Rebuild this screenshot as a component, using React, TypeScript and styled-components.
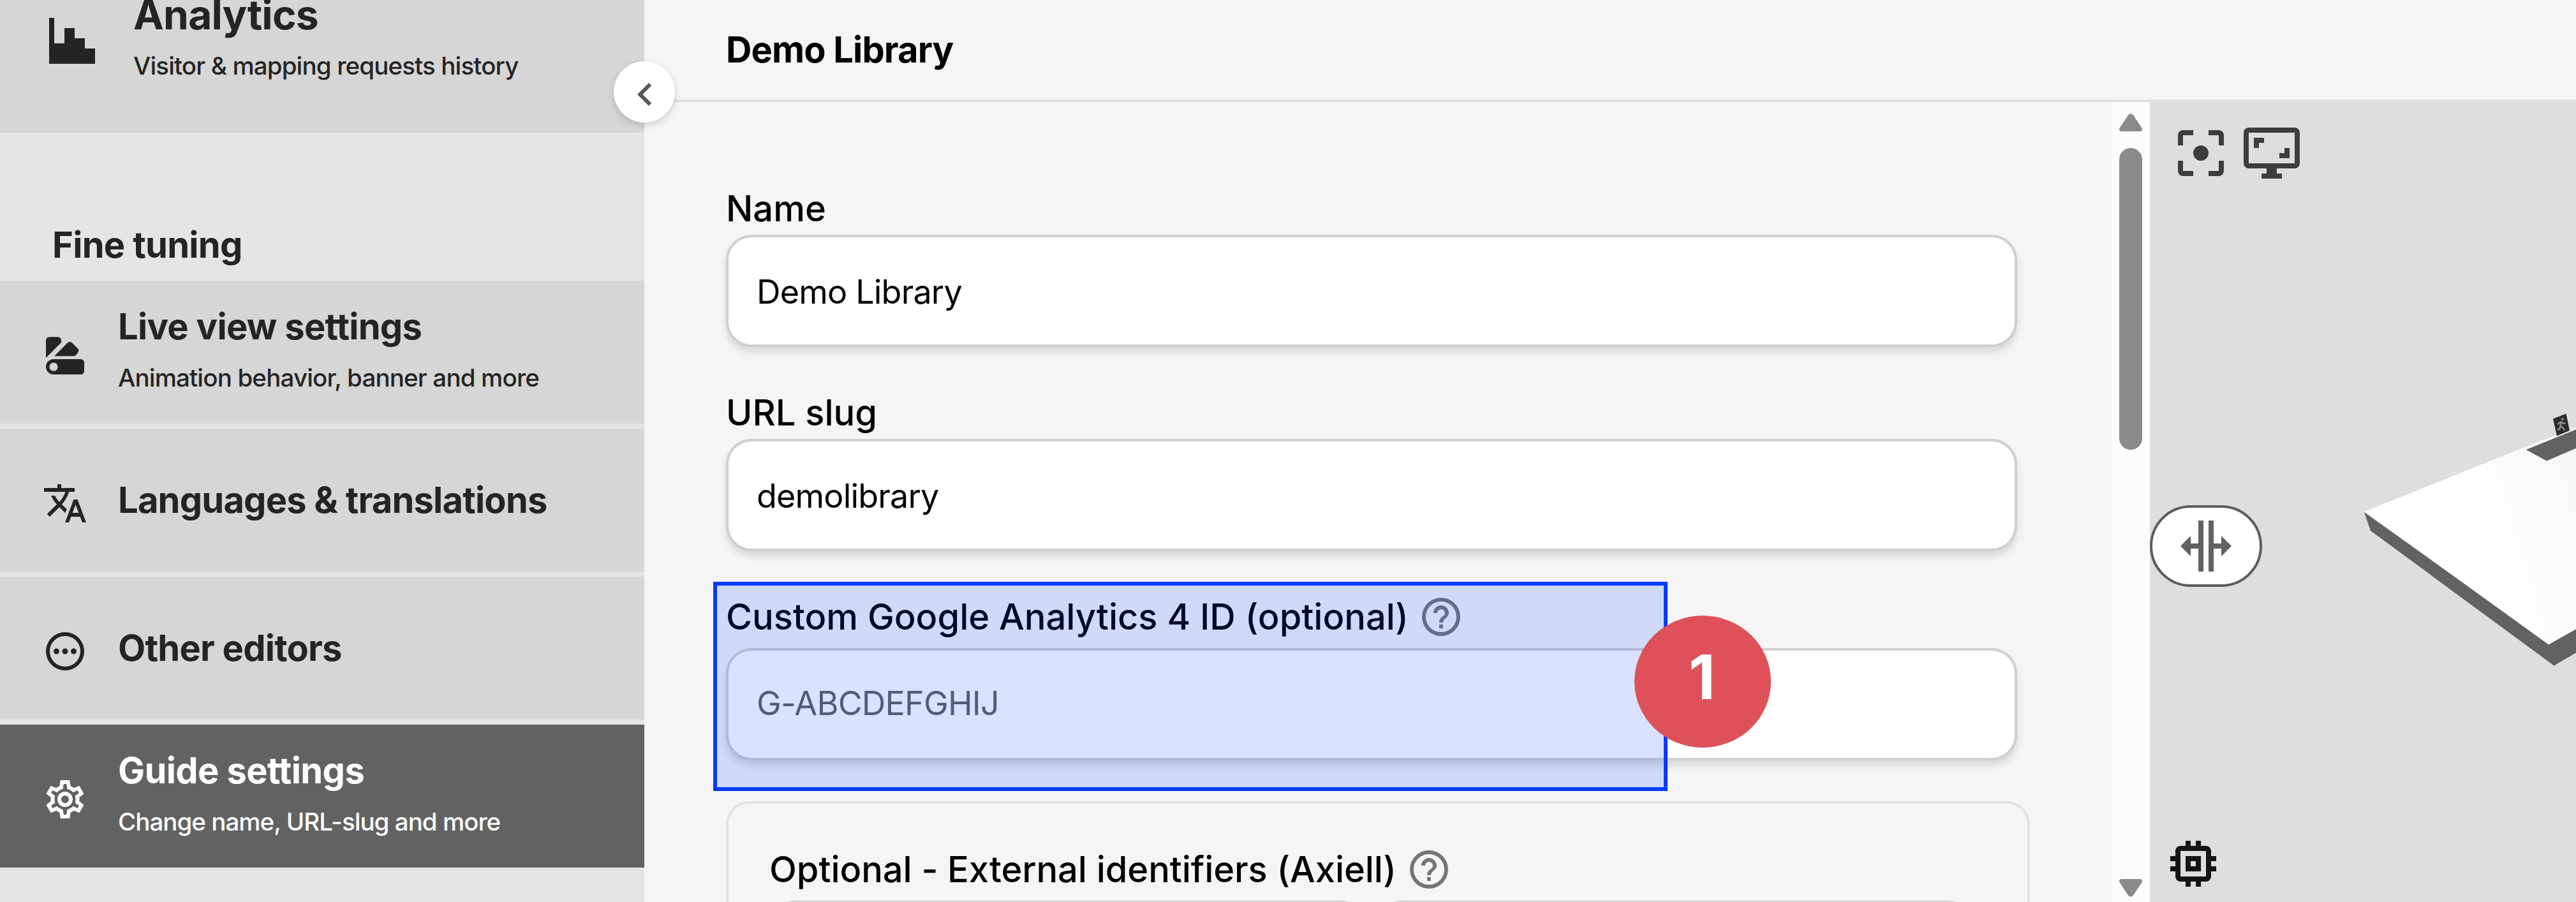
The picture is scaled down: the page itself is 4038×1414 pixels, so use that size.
import React from 'react';
import styled, { createGlobalStyle } from 'styled-components';

const GlobalStyle = createGlobalStyle`
  *, *::before, *::after { box-sizing: border-box; }
  html, body { margin: 0; padding: 0; overflow: hidden; }
  body { font-family: Inter, "Liberation Sans", sans-serif; color: #000; background: #f5f5f5; }
`;

const paths = {
  histogram: 'M3,3H5V13H9V7H13V11H17V15H21V21H3V3Z',
  translate:
    'M12.87,15.07L10.33,12.56L10.36,12.53C12.1,10.59 13.34,8.36 14.07,6H17V4H10V2H8V4H1V6H12.17C11.5,7.92 10.44,9.75 9,11.35C8.07,10.32 7.3,9.19 6.69,8H4.69C5.42,9.63 6.42,11.17 7.67,12.56L2.58,17.58L4,19L9,14L12.11,17.11L12.87,15.07M18.5,10H16.5L12,22H14L15.12,19H19.87L21,22H23L18.5,10M15.88,17L17.5,12.67L19.12,17H15.88Z',
  dots: 'M12,2A10,10 0 1,0 22,12A10,10 0 0,0 12,2M12,20A8,8 0 1,1 20,12A8,8 0 0,1 12,20M12,10.5A1.5,1.5 0 1,0 13.5,12A1.5,1.5 0 0,0 12,10.5M7.5,10.5A1.5,1.5 0 1,0 9,12A1.5,1.5 0 0,0 7.5,10.5M16.5,10.5A1.5,1.5 0 1,0 18,12A1.5,1.5 0 0,0 16.5,10.5Z',
  cog: 'M12,8A4,4 0 0,1 16,12A4,4 0 0,1 12,16A4,4 0 0,1 8,12A4,4 0 0,1 12,8M12,10A2,2 0 0,0 10,12A2,2 0 0,0 12,14A2,2 0 0,0 14,12A2,2 0 0,0 12,10M10,22C9.75,22 9.54,21.82 9.5,21.58L9.13,18.93C8.5,18.68 7.96,18.34 7.44,17.94L4.95,18.95C4.73,19.03 4.46,18.95 4.34,18.73L2.34,15.27C2.21,15.05 2.27,14.78 2.46,14.63L4.57,12.97L4.5,12L4.57,11L2.46,9.37C2.27,9.22 2.21,8.95 2.34,8.73L4.34,5.27C4.46,5.05 4.73,4.96 4.95,5.05L7.44,6.05C7.96,5.66 8.5,5.32 9.13,5.07L9.5,2.42C9.54,2.18 9.75,2 10,2H14C14.25,2 14.46,2.18 14.5,2.42L14.87,5.07C15.5,5.32 16.04,5.66 16.56,6.05L19.05,5.05C19.27,4.96 19.54,5.05 19.66,5.27L21.66,8.73C21.79,8.95 21.73,9.22 21.54,9.37L19.43,11L19.5,12L19.43,13L21.54,14.63C21.73,14.78 21.79,15.05 21.66,15.27L19.66,18.73C19.54,18.95 19.27,19.04 19.05,18.95L16.56,17.95C16.04,18.34 15.5,18.68 14.87,18.93L14.5,21.58C14.46,21.82 14.25,22 14,22H10M11.25,4L10.88,6.61C9.68,6.86 8.62,7.5 7.85,8.39L5.44,7.35L4.69,8.65L6.8,10.2C6.4,11.37 6.4,12.64 6.8,13.8L4.68,15.36L5.43,16.66L7.86,15.62C8.63,16.5 9.68,17.14 10.87,17.38L11.24,20H12.76L13.13,17.39C14.32,17.14 15.37,16.5 16.14,15.62L18.57,16.66L19.32,15.36L17.2,13.81C17.6,12.64 17.6,11.37 17.2,10.2L19.31,8.65L18.56,7.35L16.15,8.39C15.38,7.5 14.32,6.86 13.12,6.62L12.75,4H11.25Z',
  swatch:
    'M2,4.2A1.8,1.8 0 0,1 3.8,2.4H8.2A1.8,1.8 0 0,1 10,4.2V5.3L2,13.3ZM6.4,12.4L13.2,5.5A1.8,1.8 0 0,1 15.7,5.5L18.7,8.5A1.6,1.6 0 0,1 18.8,10.4L17.9,11.7A1.7,1.7 0 0,1 16.5,12.4ZM6,14H20.2A1.8,1.8 0 0,1 22,15.8V20.2A1.8,1.8 0 0,1 20.2,22H6A4,4 0 0,1 6,14ZM6,15.8A2.2,2.2 0 1,0 8.2,18A2.2,2.2 0 0,0 6,15.8Z',
  chevron: 'M15.41,16.58L10.83,12L15.41,7.41L14,6L8,12L14,18L15.41,16.58Z',
  help: 'M11,18H13V16H11V18M12,2A10,10 0 0,0 2,12A10,10 0 0,0 12,22A10,10 0 0,0 22,12A10,10 0 0,0 12,2M12,20C7.59,20 4,16.41 4,12C4,7.59 7.59,4 12,4C16.41,4 20,7.59 20,12C20,16.41 16.41,20 12,20M12,6A4,4 0 0,0 8,10H10A2,2 0 0,1 12,8A2,2 0 0,1 14,10C14,12 11,11.75 11,15H13C13,12.75 16,12.5 16,10A4,4 0 0,0 12,6Z',
  focus:
    'M12,9A3,3 0 0,0 9,12A3,3 0 0,0 12,15A3,3 0 0,0 15,12A3,3 0 0,0 12,9M19,19H15V21H19A2,2 0 0,0 21,19V15H19M19,3H15V5H19V9H21V5A2,2 0 0,0 19,3M5,5H9V3H5A2,2 0 0,0 3,5V9H5M5,15H3V19A2,2 0 0,0 5,21H9V19H5V15Z',
  monitor:
    'M9,6H5V10H7V8H9M19,10H17V12H15V14H19M21,16H3V4H21M21,2H3C1.89,2 1,2.89 1,4V16A2,2 0 0,0 3,18H10V20H8V22H16V20H14V18H21A2,2 0 0,0 23,16V4C23,2.89 22.1,2 21,2Z',
  split: 'M18,16V13H15V22H13V2H15V11H18V8L22,12L18,16M2,12L6,16V13H9V22H11V2H9V11H6V8L2,12Z',
  chip: 'M17,17H7V7H17M21,11V9H19V7C19,5.89 18.1,5 17,5H15V3H13V5H11V3H9V5H7C5.89,5 5,5.89 5,7V9H3V11H5V13H3V15H5V17A2,2 0 0,0 7,19H9V21H11V19H13V21H15V19H17A2,2 0 0,0 19,17V15H21V13H19V11M13,13H11V11H13M15,9H9V15H15V9Z',
};

type IconName = keyof typeof paths;

const Svg = styled.svg<{ $size: number }>`
  display: block;
  flex: none;
  width: ${(p) => p.$size}px;
  height: ${(p) => p.$size}px;
  fill: currentColor;
`;

const Icon = ({ name, size = 72 }: { name: IconName; size?: number }) => (
  <Svg $size={size} viewBox="0 0 24 24" aria-hidden="true">
    <path d={paths[name]} fillRule="evenodd" />
  </Svg>
);

const Page = styled.div`
  display: grid;
  grid-template-columns: 1010px 1fr;
  width: 4038px;
  height: 1414px;
  overflow: hidden;
  background: #f5f5f5;
`;

/* ---------- sidebar ---------- */

const Sidebar = styled.aside`
  position: relative;
  z-index: 2;
  height: 1414px;
  background: #e5e5e5;
  color: #242424;
`;

const MainEntry = styled.div`
  display: flex;
  gap: 48px;
  height: 208px;
  padding: 16px 0 0 65px;
  background: #d6d6d6;
`;

const MainText = styled.div`
  margin-top: -35px;
`;

const SectionTitle = styled.h2`
  display: flex;
  align-items: flex-end;
  height: 232px;
  margin: 0;
  padding: 0 0 16px 82px;
  font-size: 56px;
  font-weight: 700;
  line-height: 80px;
  letter-spacing: -0.68px;
`;

const Menu = styled.nav`
  display: flex;
  flex-direction: column;
  gap: 8px;
`;

const MenuItem = styled.a<{ $active?: boolean }>`
  display: flex;
  align-items: center;
  gap: 47px;
  height: 224px;
  padding-left: 66px;
  background: ${(p) => (p.$active ? '#626262' : '#d6d6d6')};
  color: ${(p) => (p.$active ? '#fff' : '#242424')};
`;

const MenuIcon = styled.span`
  padding-top: 10px;
`;

const MenuText = styled.span<{ $double: boolean }>`
  display: flex;
  flex-direction: column;
  padding-bottom: ${(p) => (p.$double ? 5 : 0)}px;
`;

const ItemTitle = styled.span<{ $large?: boolean; $tracking?: number }>`
  display: block;
  font-size: ${(p) => (p.$large ? 64 : 56)}px;
  font-weight: 700;
  line-height: 84px;
  letter-spacing: ${(p) => p.$tracking ?? -0.75}px;
  white-space: nowrap;
`;

const ItemNote = styled.span<{ $tracking?: number }>`
  display: block;
  font-size: 38.5px;
  font-weight: 450;
  line-height: 76px;
  letter-spacing: ${(p) => p.$tracking ?? -0.86}px;
  white-space: nowrap;
`;

const CollapseButton = styled.button`
  position: absolute;
  top: 96px;
  right: -48px;
  display: flex;
  align-items: center;
  justify-content: center;
  width: 96px;
  height: 96px;
  padding: 7px 0 0 2px;
  border: 0;
  border-radius: 50%;
  background: #fff;
  color: #585858;
  box-shadow: 0 4px 12px rgba(0, 0, 0, 0.16);
`;

/* ---------- main ---------- */

const Main = styled.main`
  display: flex;
  flex-direction: column;
  min-width: 0;
  height: 1414px;
`;

const Header = styled.header`
  display: flex;
  align-items: center;
  flex: none;
  height: 160px;
  padding: 0 0 1px 128px;
  border-bottom: 4px solid #e2e2e2;
`;

const Title = styled.h1`
  margin: 0;
  font-size: 56px;
  font-weight: 700;
  letter-spacing: -0.85px;
`;

const Body = styled.div`
  display: grid;
  grid-template-columns: 2300px 60px 1fr;
  flex: none;
  height: 1254px;
`;

const Form = styled.form`
  height: 1254px;
  overflow: hidden;
  padding: 126px 128px 0;
`;

const Field = styled.div`
  position: relative;
  width: 2024px;
  margin-bottom: 62px;
`;

const LabelRow = styled.div<{ $height: number; $drop: number }>`
  display: flex;
  align-items: center;
  gap: 15px;
  height: ${(p) => p.$height}px;
  padding-bottom: ${(p) => p.$drop}px;
  color: #757575;
`;

const Label = styled.label<{ $tracking?: number }>`
  font-size: 56px;
  font-weight: 500;
  line-height: 80px;
  letter-spacing: ${(p) => p.$tracking ?? 0}px;
  color: #000;
  white-space: nowrap;
`;

const Input = styled.input`
  display: block;
  width: 100%;
  height: 176px;
  padding: 2px 44px 0;
  border: 4px solid #cfcfcf;
  border-radius: 40px;
  background: #fff;
  box-shadow: 0 8px 12px rgba(0, 0, 0, 0.12);
  font: 400 52px Inter, "Liberation Sans", sans-serif;
  letter-spacing: -0.8px;
  color: #000;
  outline: none;
  &::placeholder { color: #616161; opacity: 1; }
  &:placeholder-shown { padding: 0 44px 3px; }
`;

const Highlight = styled.div`
  position: absolute;
  top: -14px;
  left: -20px;
  width: 1496px;
  height: 328px;
  border: 6px solid #003cff;
  background: rgba(0, 60, 255, 0.15);
  background-clip: padding-box;
`;

const Badge = styled.div`
  position: absolute;
  top: 39px;
  left: 1424px;
  display: flex;
  align-items: center;
  justify-content: center;
  width: 214px;
  height: 207px;
  padding: 0 2px 15px 0;
  border-radius: 50%;
  background: #de5159;
  color: #fff;
  font-size: 96px;
  font-weight: 700;
`;

const Fieldset = styled.section`
  width: 2044px;
  margin-top: 64px;
  padding: 64px 84px 64px 64px;
  border: 4px solid #e3e3e3;
  border-radius: 36px;
`;

const Pair = styled.div`
  display: grid;
  grid-template-columns: 1fr 1fr;
  gap: 16px;
`;

/* ---------- scrollbar ---------- */

const Scrollbar = styled.div`
  display: flex;
  flex-direction: column;
  align-items: center;
  height: 1254px;
  padding: 18px 0 8px;
  background: #fcfcfc;
`;

const Arrow = styled.svg`
  display: block;
  flex: none;
  width: 36px;
  height: 28px;
  fill: #8b8b8b;
`;

const Thumb = styled.div`
  width: 36px;
  height: 473px;
  margin: 26px 0 auto;
  border-radius: 18px;
  background: #8b8b8b;
`;

/* ---------- live view ---------- */

const View = styled.section`
  position: relative;
  display: flex;
  flex-direction: column;
  justify-content: space-between;
  height: 1254px;
  overflow: hidden;
  background: #dedede;
`;

const Scene = styled.svg`
  position: absolute;
  inset: 0;
  width: 668px;
  height: 1254px;
`;

const Tools = styled.div`
  display: flex;
  gap: 15px;
  padding: 32px;
  color: #3d3d3d;
`;

const Footer = styled.div`
  padding: 0 0 12px 20px;
  color: #141414;
`;

const SplitHandle = styled.button`
  position: absolute;
  top: 632px;
  left: 0;
  display: flex;
  align-items: center;
  justify-content: center;
  width: 176px;
  height: 128px;
  padding: 0;
  border: 4px solid #5c5c5c;
  border-radius: 64px;
  background: #fff;
  color: #626262;
`;

type Entry = {
  icon: IconName;
  title: string;
  titleTracking?: number;
  note?: string;
  tracking?: number;
  active?: boolean;
};

const entries: Entry[] = [
  { icon: 'swatch', title: 'Live view settings', titleTracking: -0.7, note: 'Animation behavior, banner and more', tracking: -0.83 },
  { icon: 'translate', title: 'Languages & translations', titleTracking: -0.78 },
  { icon: 'dots', title: 'Other editors' },
  { icon: 'cog', title: 'Guide settings', titleTracking: -0.6, note: 'Change name, URL-slug and more', tracking: -0.98, active: true },
];

export default function App() {
  return (
    <Page>
      <GlobalStyle />
      <Sidebar>
        <MainEntry>
          <Icon name="histogram" size={96} />
          <MainText>
            <ItemTitle $large>Analytics</ItemTitle>
            <ItemNote>Visitor &amp; mapping requests history</ItemNote>
          </MainText>
        </MainEntry>
        <SectionTitle>Fine tuning</SectionTitle>
        <Menu>
          {entries.map((e) => (
            <MenuItem key={e.title} $active={e.active}>
              <MenuIcon>
                <Icon name={e.icon} />
              </MenuIcon>
              <MenuText $double={!!e.note}>
                <ItemTitle $tracking={e.titleTracking}>{e.title}</ItemTitle>
                {e.note && <ItemNote $tracking={e.tracking}>{e.note}</ItemNote>}
              </MenuText>
            </MenuItem>
          ))}
        </Menu>
        <CollapseButton type="button">
          <Icon name="chevron" />
        </CollapseButton>
      </Sidebar>

      <Main>
        <Header>
          <Title>Demo Library</Title>
        </Header>
        <Body>
          <Form>
            <Field>
              <LabelRow $height={82} $drop={1}>
                <Label>Name</Label>
              </LabelRow>
              <Input defaultValue="Demo Library" />
            </Field>
            <Field>
              <LabelRow $height={82} $drop={1}>
                <Label>URL slug</Label>
              </LabelRow>
              <Input defaultValue="demolibrary" />
            </Field>
            <Field>
              <LabelRow $height={90} $drop={8}>
                <Label>Custom Google Analytics 4 ID (optional)</Label>
                <Icon name="help" />
              </LabelRow>
              <Input placeholder="G-ABCDEFGHIJ" />
              <Highlight />
              <Badge>1</Badge>
            </Field>
            <Fieldset>
              <LabelRow $height={88} $drop={11}>
                <Label $tracking={-0.07}>Optional - External identifiers (Axiell)</Label>
                <Icon name="help" />
              </LabelRow>
              <Pair>
                <Input />
                <Input />
              </Pair>
            </Fieldset>
          </Form>

          <Scrollbar>
            <Arrow viewBox="0 0 36 28">
              <path d="M14 2.5Q18-2 22 2.5L35 22Q38 28 32 28H4Q-2 28 1 22Z" />
            </Arrow>
            <Thumb />
            <Arrow viewBox="0 0 36 28">
              <path d="M14 25.5Q18 30 22 25.5L35 6Q38 0 32 0H4Q-2 0 1 6Z" />
            </Arrow>
          </Scrollbar>

          <View>
            <Scene viewBox="3370 160 668 1254">
              <defs>
                <linearGradient id="floor" gradientUnits="userSpaceOnUse" x1="3900" y1="860" x2="4038" y2="820">
                  <stop offset="0" stopColor="#fff" />
                  <stop offset="1" stopColor="#f8f8f8" />
                </linearGradient>
              </defs>
              <path d="M3706 803L3995 1009L4040 984V1022L4003.5 1043.5L3716 832Z" fill="#626262" />
              <path d="M3706.5 802L3960 700L4040 669V985L3995 1010.5Z" fill="url(#floor)" />
              <path d="M3959.500 705L4040 672.500V702L3992 722.500Z" fill="#626262" />
              <path d="M4002 656.500L4022.500 648.500L4028 675L4008 683.500Z" fill="#2b2b2b" />
              <g stroke="#8d8d8d" strokeWidth="2.6" fill="none" strokeLinecap="round">
                <path d="M4015 661.500L4013.500 667.500L4018 671L4019.500 674M4013.500 668L4012 672.500L4009.500 673.500M4010 664.500L4014.500 661L4017.500 664L4020.500 663" />
              </g>
              <circle cx="4017" cy="657" r="2" fill="#8d8d8d" />
            </Scene>
            <Tools>
              <Icon name="focus" size={96} />
              <Icon name="monitor" size={96} />
            </Tools>
            <Footer>
              <Icon name="chip" size={96} />
            </Footer>
            <SplitHandle type="button">
              <Icon name="split" size={96} />
            </SplitHandle>
          </View>
        </Body>
      </Main>
    </Page>
  );
}
